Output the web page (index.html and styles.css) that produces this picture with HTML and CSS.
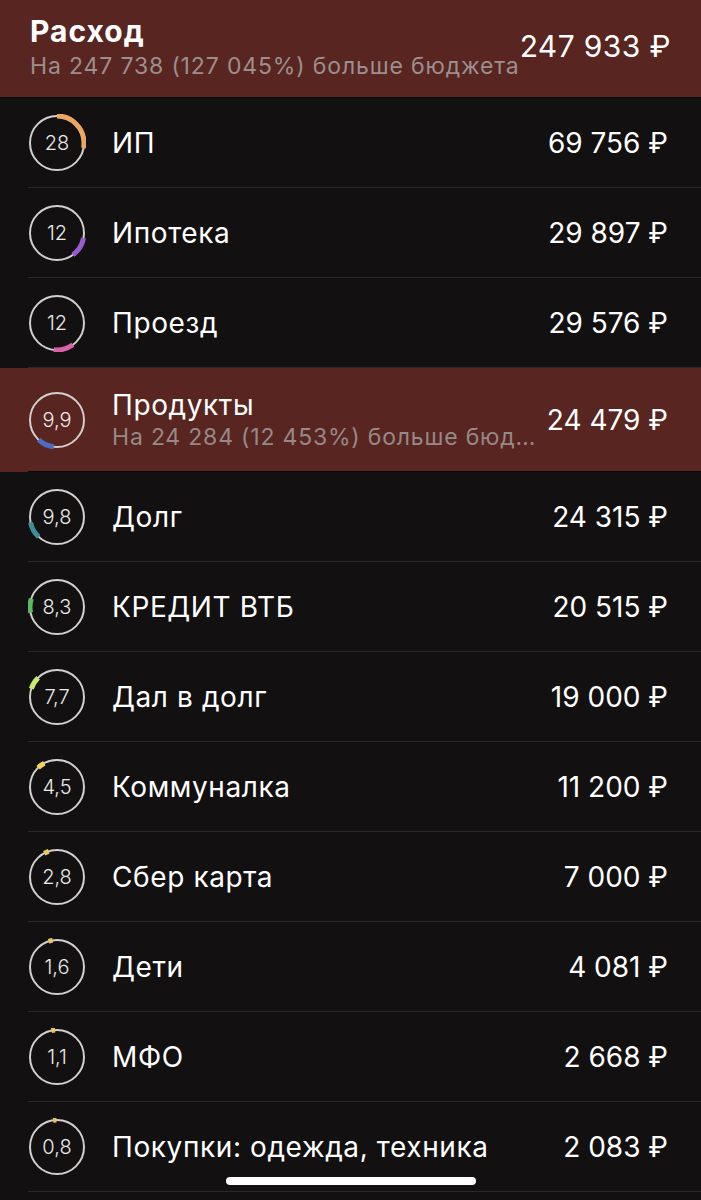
FILE: index.html
```html
<!DOCTYPE html>
<html lang="ru">

<head>
    <meta charset="UTF-8">
    <meta name="viewport" content="width=device-width, initial-scale=1.0">
    <title>Расход</title>
    <link rel="stylesheet" href="styles.css">
</head>

<body>
    <header class="summary">
        <div class="summary-text">
            <div class="summary-title">Расход</div>
            <div class="summary-note">На 247 738 (127 045%) больше бюджета</div>
        </div>
        <div class="summary-amount">247 933 ₽</div>
    </header>

    <ul class="list">
        <li class="row">
            <div class="row-inner">
                <div class="ring">
                    <svg viewBox="0 0 58 58"><circle class="track" cx="29" cy="29" r="27"/><circle class="arc" cx="29" cy="29" r="27" pathLength="100" stroke="#eba862" stroke-dasharray="28 100" stroke-dashoffset="0"/></svg>
                    <span>28</span>
                </div>
                <div class="name">ИП</div>
                <div class="amount">69 756 ₽</div>
            </div>
        </li>
        <li class="row">
            <div class="row-inner">
                <div class="ring">
                    <svg viewBox="0 0 58 58"><circle class="track" cx="29" cy="29" r="27"/><circle class="arc" cx="29" cy="29" r="27" pathLength="100" stroke="#9a5bcf" stroke-dasharray="12 100" stroke-dashoffset="-28"/></svg>
                    <span>12</span>
                </div>
                <div class="name">Ипотека</div>
                <div class="amount">29 897 ₽</div>
            </div>
        </li>
        <li class="row">
            <div class="row-inner">
                <div class="ring">
                    <svg viewBox="0 0 58 58"><circle class="track" cx="29" cy="29" r="27"/><circle class="arc" cx="29" cy="29" r="27" pathLength="100" stroke="#d962aa" stroke-dasharray="12 100" stroke-dashoffset="-40"/></svg>
                    <span>12</span>
                </div>
                <div class="name">Проезд</div>
                <div class="amount">29 576 ₽</div>
            </div>
        </li>
        <li class="row over">
            <div class="row-inner">
                <div class="ring">
                    <svg viewBox="0 0 58 58"><circle class="track" cx="29" cy="29" r="27"/><circle class="arc" cx="29" cy="29" r="27" pathLength="100" stroke="#4d6bc0" stroke-dasharray="9.9 100" stroke-dashoffset="-52"/></svg>
                    <span>9,9</span>
                </div>
                <div class="name-box">
                    <div class="name">Продукты</div>
                    <div class="note">На 24 284 (12 453%) больше бюджета</div>
                </div>
                <div class="amount">24 479 ₽</div>
            </div>
        </li>
        <li class="row">
            <div class="row-inner">
                <div class="ring">
                    <svg viewBox="0 0 58 58"><circle class="track" cx="29" cy="29" r="27"/><circle class="arc" cx="29" cy="29" r="27" pathLength="100" stroke="#3d8e98" stroke-dasharray="9.8 100" stroke-dashoffset="-61.9"/></svg>
                    <span>9,8</span>
                </div>
                <div class="name">Долг</div>
                <div class="amount">24 315 ₽</div>
            </div>
        </li>
        <li class="row">
            <div class="row-inner">
                <div class="ring">
                    <svg viewBox="0 0 58 58"><circle class="track" cx="29" cy="29" r="27"/><circle class="arc" cx="29" cy="29" r="27" pathLength="100" stroke="#5cba5e" stroke-dasharray="8.3 100" stroke-dashoffset="-71.7"/></svg>
                    <span>8,3</span>
                </div>
                <div class="name">КРЕДИТ ВТБ</div>
                <div class="amount">20 515 ₽</div>
            </div>
        </li>
        <li class="row">
            <div class="row-inner">
                <div class="ring">
                    <svg viewBox="0 0 58 58"><circle class="track" cx="29" cy="29" r="27"/><circle class="arc" cx="29" cy="29" r="27" pathLength="100" stroke="#c8ea70" stroke-dasharray="7.7 100" stroke-dashoffset="-80"/></svg>
                    <span>7,7</span>
                </div>
                <div class="name">Дал в долг</div>
                <div class="amount">19 000 ₽</div>
            </div>
        </li>
        <li class="row">
            <div class="row-inner">
                <div class="ring">
                    <svg viewBox="0 0 58 58"><circle class="track" cx="29" cy="29" r="27"/><circle class="arc" cx="29" cy="29" r="27" pathLength="100" stroke="#f3d55c" stroke-dasharray="4.5 100" stroke-dashoffset="-87.7"/></svg>
                    <span>4,5</span>
                </div>
                <div class="name">Коммуналка</div>
                <div class="amount">11 200 ₽</div>
            </div>
        </li>
        <li class="row">
            <div class="row-inner">
                <div class="ring">
                    <svg viewBox="0 0 58 58"><circle class="track" cx="29" cy="29" r="27"/><circle class="arc" cx="29" cy="29" r="27" pathLength="100" stroke="#f2cc5a" stroke-dasharray="2.8 100" stroke-dashoffset="-92.2"/></svg>
                    <span>2,8</span>
                </div>
                <div class="name">Сбер карта</div>
                <div class="amount">7 000 ₽</div>
            </div>
        </li>
        <li class="row">
            <div class="row-inner">
                <div class="ring">
                    <svg viewBox="0 0 58 58"><circle class="track" cx="29" cy="29" r="27"/><circle class="arc" cx="29" cy="29" r="27" pathLength="100" stroke="#f2c75a" stroke-dasharray="2.3 100" stroke-dashoffset="-95"/></svg>
                    <span>1,6</span>
                </div>
                <div class="name">Дети</div>
                <div class="amount">4 081 ₽</div>
            </div>
        </li>
        <li class="row">
            <div class="row-inner">
                <div class="ring">
                    <svg viewBox="0 0 58 58"><circle class="track" cx="29" cy="29" r="27"/><circle class="arc" cx="29" cy="29" r="27" pathLength="100" stroke="#f2c35a" stroke-dasharray="2.2 100" stroke-dashoffset="-96.6"/></svg>
                    <span>1,1</span>
                </div>
                <div class="name">МФО</div>
                <div class="amount">2 668 ₽</div>
            </div>
        </li>
        <li class="row">
            <div class="row-inner">
                <div class="ring">
                    <svg viewBox="0 0 58 58"><circle class="track" cx="29" cy="29" r="27"/><circle class="arc" cx="29" cy="29" r="27" pathLength="100" stroke="#f2c05a" stroke-dasharray="2.1 100" stroke-dashoffset="-97.6"/></svg>
                    <span>0,8</span>
                </div>
                <div class="name">Покупки: одежда, техника</div>
                <div class="amount">2 083 ₽</div>
            </div>
        </li>
    </ul>

    <div class="home-bar"></div>
</body>

</html>
```

FILE: styles.css
```css
body {
    margin: 0;
    background-color: #121010;
    color: #fff;
    font-family: Inter, "DejaVu Sans", sans-serif;
    overflow: hidden;
}

.summary {
    display: flex;
    align-items: center;
    justify-content: space-between;
    padding: 14px 30px 17px 30px;
    background-color: #582521;
    border-bottom: 1px solid #0b0909;
}

.summary-title {
    font-size: 30px;
    font-weight: bold;
    letter-spacing: 1px;
    line-height: 34px;
    margin-bottom: 4px;
}

.summary-note {
    font-size: 23px;
    letter-spacing: 0.85px;
    line-height: 28px;
    color: #9c8f8e;
    white-space: nowrap;
}

.summary-amount {
    font-size: 30px;
    letter-spacing: 0.4px;
    line-height: 34px;
    margin-top: -2px;
    white-space: nowrap;
}

.list {
    list-style: none;
    margin: 0;
    padding: 0;
}

.row-inner {
    display: flex;
    align-items: center;
    height: 89px;
    margin-left: 28px;
    padding-right: 33px;
    border-bottom: 1px solid #2a2828;
}

.row.over {
    background-color: #582521;
}

.row.over .row-inner {
    height: 103px;
    border-bottom-color: #0b0909;
}

.ring {
    position: relative;
    flex: none;
    width: 58px;
    height: 58px;
    margin-right: 26px;
}

.ring svg {
    display: block;
    width: 58px;
    height: 58px;
    transform: rotate(-90deg);
}

.ring .track {
    fill: none;
    stroke: #d2cfcf;
    stroke-width: 2;
}

.ring .arc {
    fill: none;
    stroke-width: 5;
}

.ring span {
    position: absolute;
    inset: 0;
    display: flex;
    align-items: center;
    justify-content: center;
    font-size: 20px;
    font-weight: 300;
    color: #eceaea;
}

.name {
    flex: 1;
    font-size: 28px;
    letter-spacing: 0.6px;
    line-height: 34px;
    white-space: nowrap;
}

.name-box {
    flex: 1;
    min-width: 0;
    padding-right: 4px;
}

.note {
    font-size: 23px;
    letter-spacing: 0.8px;
    line-height: 30px;
    color: #968988;
    white-space: nowrap;
    overflow: hidden;
    text-overflow: ellipsis;
}

.amount {
    flex: none;
    font-size: 28px;
    line-height: 34px;
    white-space: nowrap;
}

.home-bar {
    position: fixed;
    left: 226px;
    bottom: 15px;
    width: 250px;
    height: 8px;
    border-radius: 4px;
    background-color: #fff;
}
```
